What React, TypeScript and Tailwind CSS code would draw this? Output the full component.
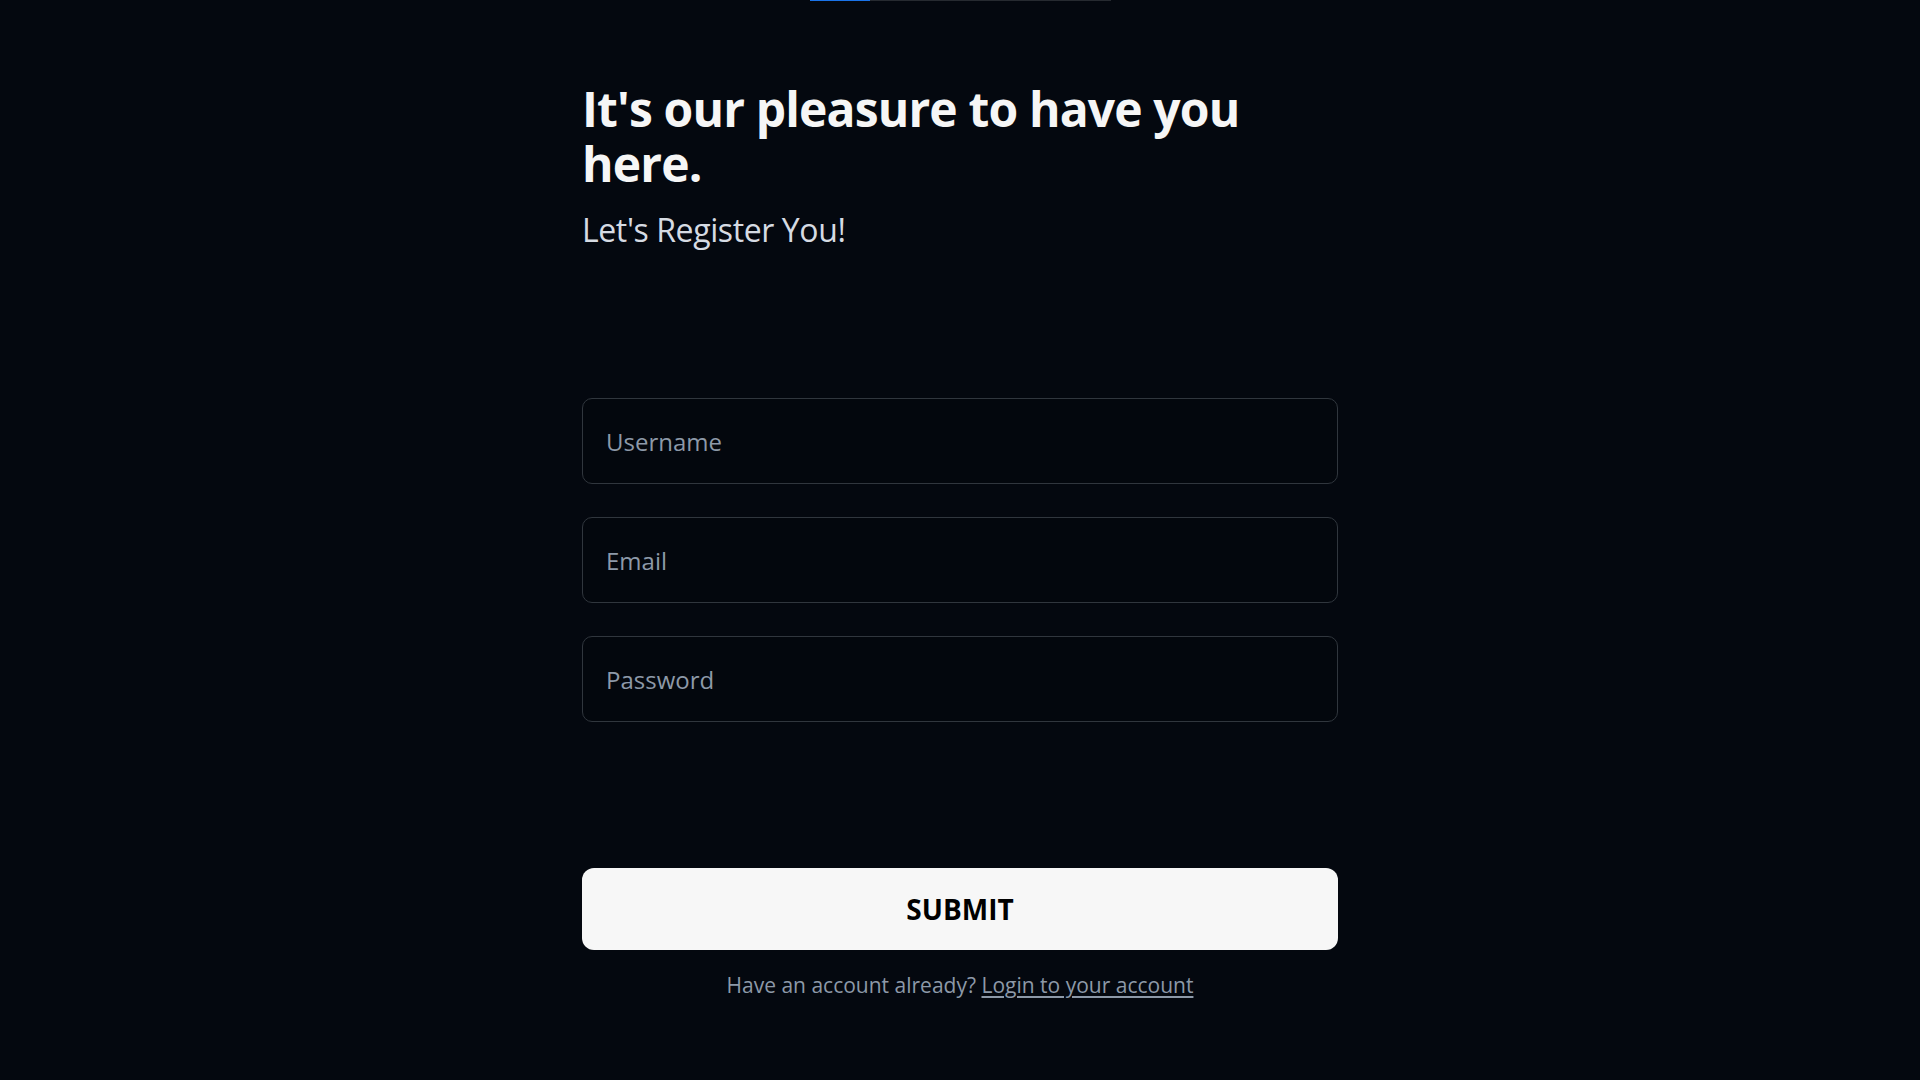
import { useState } from "react";

export default function App() {
  const [username, setUsername] = useState("");
  const [email, setEmail] = useState("");
  const [password, setPassword] = useState("");

  const fields = [
    { id: "username", type: "text", placeholder: "Username", value: username, set: setUsername },
    { id: "email", type: "email", placeholder: "Email", value: email, set: setEmail },
    { id: "password", type: "password", placeholder: "Password", value: password, set: setPassword },
  ];

  return (
    <div
      className="min-h-screen bg-[#04080f] text-[#f5f5f5]"
      style={{ fontFamily: '"Open Sans", "Noto Sans", sans-serif' }}
    >
      {/* Progress bar */}
      <div className="flex justify-center">
        <div className="w-[301px] h-px bg-[#262a30] flex">
          <div className="w-[60px] h-px bg-[#1a73e8]" />
        </div>
      </div>

      <div className="w-[756px] mx-auto flex flex-col">
        {/* Heading */}
        <h1 className="mt-[80px] text-[48px] leading-[55px] font-bold tracking-[-0.85px] text-[#f6f6f6]">
          It's our pleasure to have you here.
        </h1>
        <p className="mt-[15px] text-[32px] leading-[48px] text-[#d6dbe3] tracking-[-0.4px]">
          Let's Register You!
        </p>

        {/* Form */}
        <form
          className="mt-[144px] flex flex-col"
          onSubmit={(e) => e.preventDefault()}
        >
          <div className="flex flex-col gap-[33px]">
            {fields.map((f) => (
              <input
                key={f.id}
                type={f.type}
                value={f.value}
                onChange={(e) => f.set(e.target.value)}
                placeholder={f.placeholder}
                className="h-[86px] w-full rounded-[10px] border border-[#30363d] bg-[#03070d] px-[23px] text-[24px] text-[#e6edf3] placeholder:text-[#8d99a8] outline-none focus:border-[#1f6feb]"
              />
            ))}
          </div>

          <button
            type="submit"
            className="mt-[146px] h-[82px] w-full rounded-xl bg-[#f7f7f7] text-[28px] font-bold text-black"
          >
            SUBMIT
          </button>

          <p className="mt-[20px] text-center text-[21px] text-[#8d99a8]">
            Have an account already?{" "}
            <a href="#" className="underline underline-offset-[3px]">
              Login to your account
            </a>
          </p>
        </form>
      </div>
    </div>
  );
}
